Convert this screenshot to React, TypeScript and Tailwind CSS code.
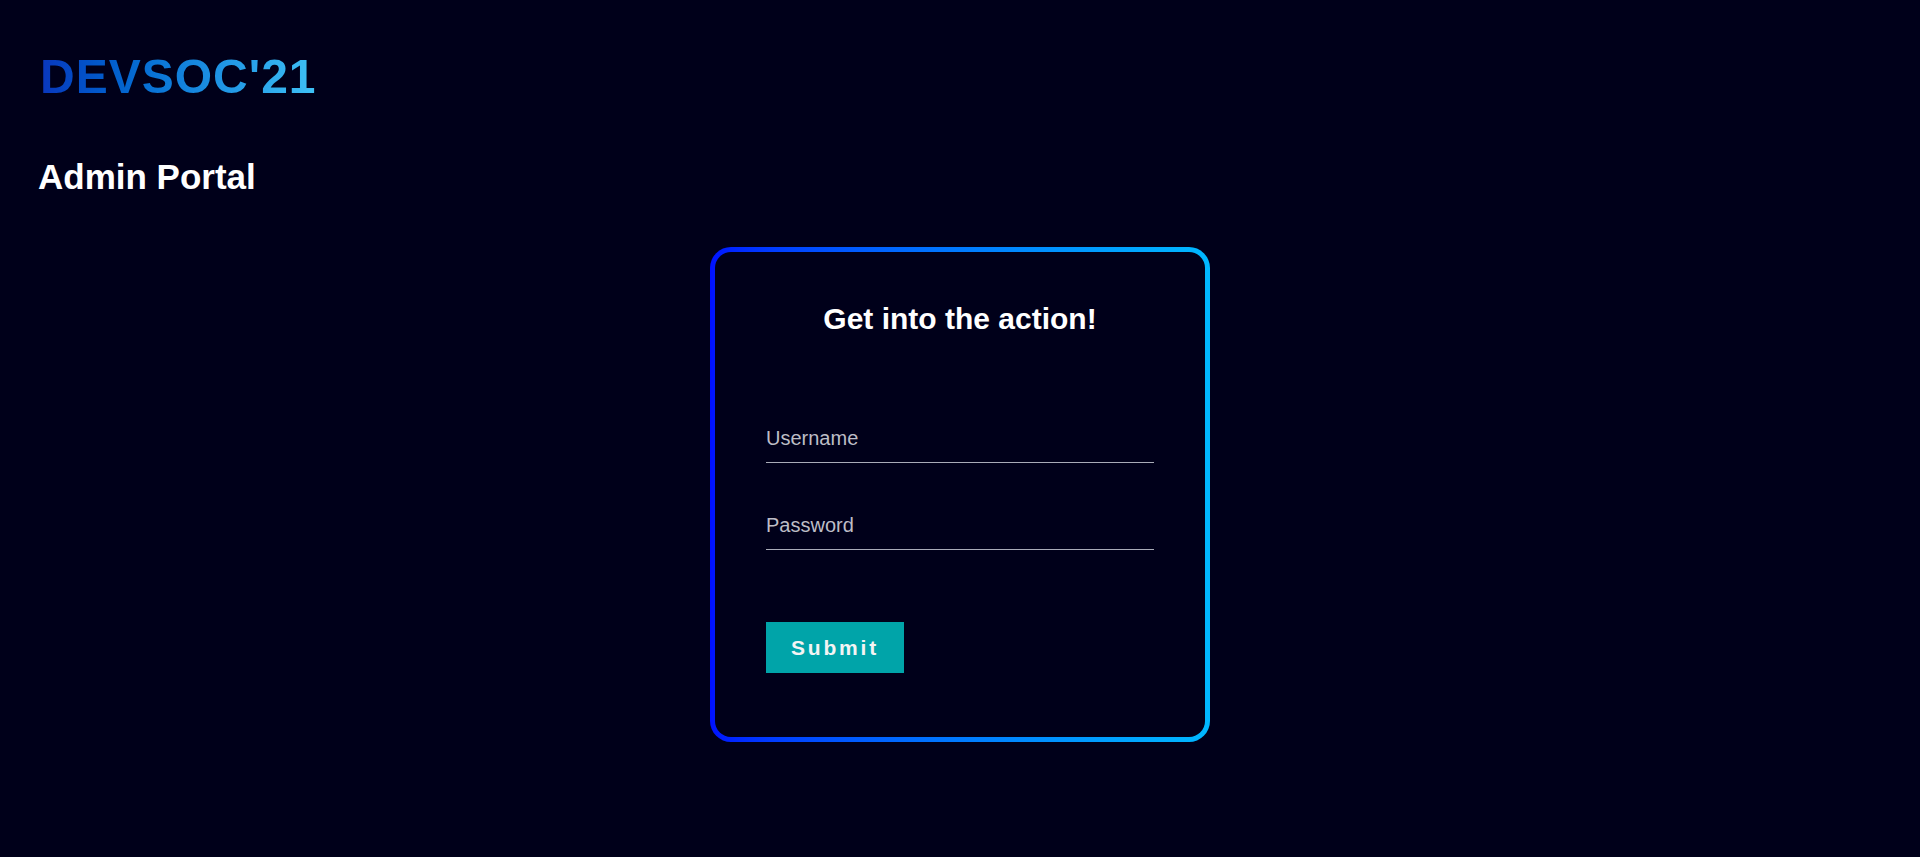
import React from "react";

export default function App() {
  return (
    <div
      className="min-h-[857px] w-full bg-[#00001a] pl-10 pr-10 pt-[53px] pb-10"
      style={{ fontFamily: '"Liberation Sans", Arial, sans-serif' }}
    >
      <h1 className="inline-block bg-gradient-to-r from-[#0a36bd] to-[#3fc2f6] bg-clip-text text-[48px] font-bold leading-[48px] tracking-[1px] text-transparent">
        DEVSOC'21
      </h1>
      <h2 className="-ml-[2px] mt-[56px] text-[35px] font-bold leading-[40px] text-white">
        Admin Portal
      </h2>

      <div className="mx-auto mt-[50px] w-[500px] rounded-[21px] bg-gradient-to-r from-[#0010ff] to-[#00b8ff] p-[5px]">
        <div className="flex flex-col rounded-[16px] bg-[#00001a] px-[51px] pt-[50px] pb-[64px]">
          <h3 className="text-center text-[30px] font-bold leading-[34px] text-white">
            Get into the action!
          </h3>
          <input
            type="text"
            placeholder="Username"
            className="mt-[83px] w-full border-0 border-b border-solid border-[#a9acb8] bg-transparent px-0 pt-[8px] pb-[13px] text-[20px] leading-[22px] text-white outline-none placeholder:text-[#bdbdc6]"
          />
          <input
            type="password"
            placeholder="Password"
            className="mt-[43px] w-full border-0 border-b border-solid border-[#a9acb8] bg-transparent px-0 pt-[8px] pb-[13px] text-[20px] leading-[22px] text-white outline-none placeholder:text-[#bdbdc6]"
          />
          <div className="mt-[72px]">
            <button
              type="button"
              className="flex h-[51px] w-[138px] items-center justify-center bg-[#00a4a9] text-[21px] font-bold tracking-[2.8px] text-[#f4f4f4]"
            >
              Submit
            </button>
          </div>
        </div>
      </div>
    </div>
  );
}
